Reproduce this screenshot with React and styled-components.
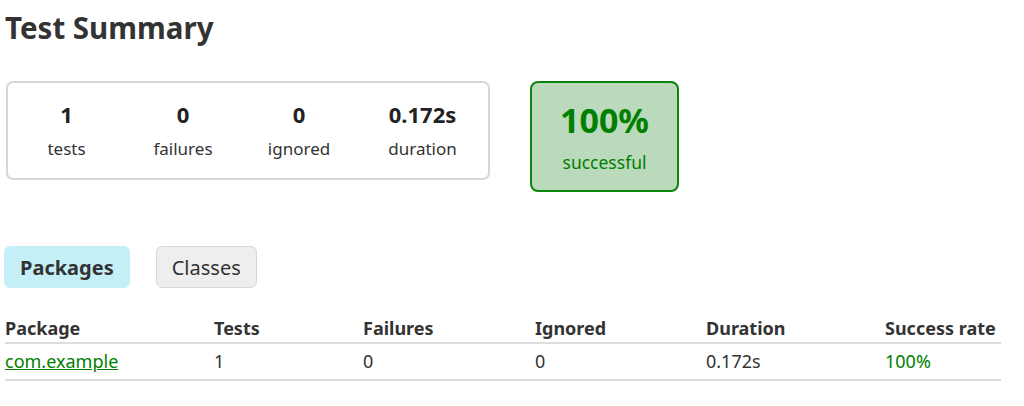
import React from 'react';
import styled, { createGlobalStyle } from 'styled-components';

const summary = [
	{ value: '1', label: 'tests', width: 117 },
	{ value: '0', label: 'failures', width: 116 },
	{ value: '0', label: 'ignored', width: 116 },
	{ value: '0.172s', label: 'duration', width: 131 },
];

const columns = ['Package', 'Tests', 'Failures', 'Ignored', 'Duration', 'Success rate'];

const packages = [
	{ name: 'com.example', tests: '1', failures: '0', ignored: '0', duration: '0.172s', rate: '100%' },
];

const App = () => {
	return (
		<>
			<GlobalStyle />
			<Page>
				<Title>Test Summary</Title>
				<SummaryRow>
					<SummaryBox>
						{summary.map((item) => (
							<Counter key={item.label} $width={item.width}>
								<CounterValue>{item.value}</CounterValue>
								<CounterLabel>{item.label}</CounterLabel>
							</Counter>
						))}
					</SummaryBox>
					<SuccessBox>
						<SuccessValue>100%</SuccessValue>
						<SuccessLabel>successful</SuccessLabel>
					</SuccessBox>
				</SummaryRow>
				<Tabs>
					<Tab $active>Packages</Tab>
					<Tab>Classes</Tab>
				</Tabs>
				<Table>
					<HeadRow>
						{columns.map((col) => (
							<HeadCell key={col}>{col}</HeadCell>
						))}
					</HeadRow>
					{packages.map((pkg) => (
						<BodyRow key={pkg.name}>
							<Cell>
								<PackageLink href='#'>{pkg.name}</PackageLink>
							</Cell>
							<Cell>{pkg.tests}</Cell>
							<Cell>{pkg.failures}</Cell>
							<Cell>{pkg.ignored}</Cell>
							<Cell>{pkg.duration}</Cell>
							<Cell $success>{pkg.rate}</Cell>
						</BodyRow>
					))}
				</Table>
			</Page>
		</>
	);
};

export default App;

const GlobalStyle = createGlobalStyle`
	body {
		margin: 0;
		background: #fff;
		font-family: 'Noto Sans', 'Liberation Sans', sans-serif;
		color: #333;
	}
`;

const Page = styled.div`
	padding: 13px 23px 0 5px;
`;

const Title = styled.h1`
	margin: 0;
	font-size: 29.5px;
	line-height: 30px;
	font-weight: 700;
	color: #333;
`;

const SummaryRow = styled.div`
	display: flex;
	align-items: flex-start;
	gap: 40px;
	margin-top: 38px;
	padding-left: 1px;
`;

const SummaryBox = styled.div`
	display: flex;
	box-sizing: border-box;
	height: 99px;
	padding-top: 18px;
	border: 2px solid #d6d6d6;
	border-radius: 7px;
`;

const Counter = styled.div`
	width: ${(p) => p.$width}px;
	display: flex;
	flex-direction: column;
	align-items: center;
`;

const CounterValue = styled.div`
	font-size: 22px;
	line-height: 26px;
	font-weight: 700;
	color: #222;
`;

const CounterLabel = styled.div`
	margin-top: 12px;
	font-size: 17px;
	line-height: 20px;
	color: #333;
`;

const SuccessBox = styled.div`
	box-sizing: border-box;
	width: 149px;
	height: 111px;
	padding-top: 17px;
	display: flex;
	flex-direction: column;
	align-items: center;
	background: #bbd9bb;
	border: 2px solid #0a850a;
	border-radius: 8px;
	color: #008000;
`;

const SuccessValue = styled.div`
	font-size: 34px;
	line-height: 40px;
	font-weight: 700;
`;

const SuccessLabel = styled.div`
	margin-top: 12px;
	font-size: 17.5px;
	line-height: 20px;
`;

const Tabs = styled.div`
	display: flex;
	gap: 26px;
	margin-top: 54px;
	margin-left: -1px;
`;

const Tab = styled.div`
	box-sizing: border-box;
	height: 42px;
	padding: 0 15px;
	display: flex;
	align-items: center;
	font-size: 20px;
	font-weight: ${(p) => (p.$active ? 700 : 400)};
	color: #333;
	background: ${(p) => (p.$active ? '#c5eff6' : '#eee')};
	border: 1px solid ${(p) => (p.$active ? '#c5eff6' : '#d8d8d8')};
	border-radius: 6px;
`;

const Table = styled.div`
	margin-top: 29px;
`;

const HeadRow = styled.div`
	display: grid;
	grid-template-columns: 209px 149px 172px 171px 179px 1fr;
	padding-bottom: 3px;
	border-bottom: 2px solid #ddd;
`;

const BodyRow = styled.div`
	display: grid;
	grid-template-columns: 209px 149px 172px 171px 179px 1fr;
	padding: 6px 0 7px;
	border-bottom: 2px solid #ddd;
`;

const HeadCell = styled.div`
	font-size: 18px;
	line-height: 22px;
	font-weight: 700;
	color: #333;
	white-space: nowrap;
`;

const Cell = styled.div`
	font-size: 18px;
	line-height: 22px;
	color: ${(p) => (p.$success ? '#008000' : '#333')};
`;

const PackageLink = styled.a`
	color: #008000;
	text-decoration: underline;
`;
